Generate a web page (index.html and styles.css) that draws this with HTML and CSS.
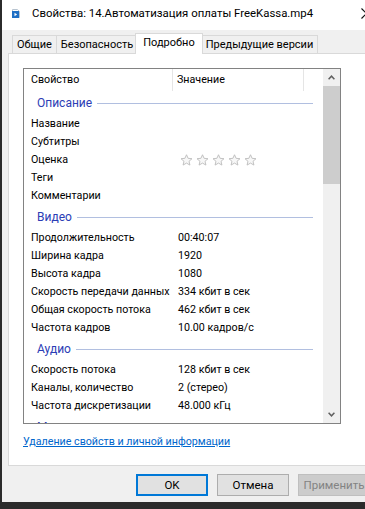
FILE: index.html
```html
<!DOCTYPE html>
<html lang="ru">
<head>
<meta charset="utf-8">
<title>Свойства</title>
<link rel="stylesheet" href="styles.css">
</head>
<body>
<div class="window">
  <div class="titlebar">
    <svg class="appicon" width="8" height="9" viewBox="0 0 8 9">
      <path d="M0.5 0.5h5l2 2v6h-7z" fill="#fff" stroke="#b8c4d0"/>
      <rect x="0" y="2" width="7" height="7" fill="#1f6fc4"/>
      <path d="M2.5 3.8l2.6 1.7-2.6 1.7z" fill="#fff"/>
    </svg>
    <span class="title">Свойства: 14.Автоматизация оплаты FreeKassa.mp4</span>
    <svg class="close" width="11" height="11" viewBox="0 0 11 11">
      <path d="M0.5 0.5l10 10M10.5 0.5l-10 10" stroke="#111" stroke-width="1.2"/>
    </svg>
  </div>
  <div class="tabs">
    <div class="tab">Общие</div>
    <div class="tab">Безопасность</div>
    <div class="tab active">Подробно</div>
    <div class="tab">Предыдущие версии</div>
  </div>
  <div class="panel">
    <div class="listview">
      <div class="list">
        <div class="header">
          <div class="hcell hname">Свойство</div>
          <div class="hcell hvalue">Значение</div>
          <div class="hcell hrest"></div>
        </div>
        <div class="group"><span>Описание</span><i class="rule"></i></div>
        <div class="row"><span class="k">Название</span><span class="v"></span></div>
        <div class="row"><span class="k">Субтитры</span><span class="v"></span></div>
        <div class="row"><span class="k">Оценка</span>
          <span class="v stars">
            <svg class="star" viewBox="0 0 14 13"><path d="M7 0.8l1.75 3.9 4.2.4-3.2 2.8.95 4.1L7 9.85 3.3 12l.95-4.1-3.2-2.8 4.2-.4z"/></svg>
            <svg class="star" viewBox="0 0 14 13"><path d="M7 0.8l1.75 3.9 4.2.4-3.2 2.8.95 4.1L7 9.85 3.3 12l.95-4.1-3.2-2.8 4.2-.4z"/></svg>
            <svg class="star" viewBox="0 0 14 13"><path d="M7 0.8l1.75 3.9 4.2.4-3.2 2.8.95 4.1L7 9.85 3.3 12l.95-4.1-3.2-2.8 4.2-.4z"/></svg>
            <svg class="star" viewBox="0 0 14 13"><path d="M7 0.8l1.75 3.9 4.2.4-3.2 2.8.95 4.1L7 9.85 3.3 12l.95-4.1-3.2-2.8 4.2-.4z"/></svg>
            <svg class="star" viewBox="0 0 14 13"><path d="M7 0.8l1.75 3.9 4.2.4-3.2 2.8.95 4.1L7 9.85 3.3 12l.95-4.1-3.2-2.8 4.2-.4z"/></svg>
          </span>
        </div>
        <div class="row"><span class="k">Теги</span><span class="v"></span></div>
        <div class="row"><span class="k">Комментарии</span><span class="v"></span></div>
        <div class="group"><span>Видео</span><i class="rule"></i></div>
        <div class="row"><span class="k">Продолжительность</span><span class="v">00:40:07</span></div>
        <div class="row"><span class="k">Ширина кадра</span><span class="v">1920</span></div>
        <div class="row"><span class="k">Высота кадра</span><span class="v">1080</span></div>
        <div class="row"><span class="k">Скорость передачи данных</span><span class="v">334 кбит в сек</span></div>
        <div class="row"><span class="k">Общая скорость потока</span><span class="v">462 кбит в сек</span></div>
        <div class="row"><span class="k">Частота кадров</span><span class="v">10.00 кадров/с</span></div>
        <div class="group"><span>Аудио</span><i class="rule"></i></div>
        <div class="row"><span class="k">Скорость потока</span><span class="v">128 кбит в сек</span></div>
        <div class="row"><span class="k">Каналы, количество</span><span class="v">2 (стерео)</span></div>
        <div class="row"><span class="k">Частота дискретизации</span><span class="v">48.000 кГц</span></div>
        <div class="group"><span>Мультимедиа</span><i class="rule"></i></div>
      </div>
      <div class="scrollbar">
        <div class="sbtn">
          <svg width="7" height="5" viewBox="0 0 7 5"><path d="M0.6 4.2L3.5 1.2 6.4 4.2" fill="none" stroke="#606060" stroke-width="1.5"/></svg>
        </div>
        <div class="thumb"></div>
        <div class="track"></div>
        <div class="sbtn">
          <svg width="7" height="5" viewBox="0 0 7 5"><path d="M0.6 0.8L3.5 3.8 6.4 0.8" fill="none" stroke="#606060" stroke-width="1.5"/></svg>
        </div>
      </div>
    </div>
    <a class="link" href="#">Удаление свойств и личной информации</a>
  </div>
  <div class="buttons">
    <button class="btn default">OK</button>
    <button class="btn">Отмена</button>
    <button class="btn disabled">Применить</button>
  </div>
</div>
</body>
</html>
```

FILE: styles.css
```css
* { box-sizing: border-box; }

html, body {
  margin: 0;
  padding: 0;
  background: #2b2b2b;
  overflow: hidden;
}

body {
  font-family: Roboto, "Liberation Sans", sans-serif;
  font-size: 10.7px;
  color: #000;
}

.window {
  margin-left: 2px;
  width: 380px;
  height: 502px;
  background: #f0f0f0;
  display: flex;
  flex-direction: column;
  overflow: hidden;
}

/* title bar */
.titlebar {
  height: 30px;
  flex: none;
  background: #fff;
  display: flex;
  align-items: flex-start;
  padding: 4px 10px 0 10px;
}
.appicon { margin-top: 5px; flex: none; }
.title {
  margin-left: 12px;
  line-height: 18px;
  font-size: 11.4px;
  white-space: nowrap;
}
.close { margin-left: auto; margin-top: 4px; flex: none; }

/* tabs */
.tabs {
  height: 23px;
  flex: none;
  display: flex;
  align-items: flex-end;
  padding-left: 10px;
}
.tab {
  height: 18px;
  line-height: 17px;
  padding: 0 4px;
  border: 1px solid #d9d9d9;
  border-bottom: none;
  margin-right: -1px;
  background: #f0f0f0;
  white-space: nowrap;
  font-size: 11px;
}
.tab.active {
  height: 21px;
  line-height: 18px;
  background: #fff;
  margin: 0 -2px -1px -2px;
  padding: 0 7px;
  position: relative;
  z-index: 1;
}

/* panel */
.panel {
  height: 413px;
  flex: none;
  margin-left: 6px;
  background: #fff;
  border: 1px solid #d9d9d9;
  border-right: none;
  padding: 14px 0 0 14px;
  display: flex;
  flex-direction: column;
  align-items: flex-start;
}

.listview {
  width: 318px;
  height: 356px;
  border: 1px solid #828282;
  display: flex;
  overflow: hidden;
}
.list {
  flex: 1;
  min-width: 0;
  overflow: hidden;
}

.header {
  height: 22px;
  display: flex;
}
.hcell {
  height: 22px;
  line-height: 22px;
  border-right: 1px solid #e5e5e5;
  white-space: nowrap;
}
.hname { width: 149px; padding-left: 7px; }
.hvalue { width: 131px; padding-left: 4px; }
.hrest { flex: 1; border-right: none; }

.group {
  height: 24px;
  display: flex;
  align-items: center;
  padding: 0 10px 0 13px;
  color: #2b3db5;
  font-size: 12px;
}
.rule {
  flex: 1;
  height: 1px;
  margin-left: 5px;
  background: #b1bfe0;
}

.row {
  height: 18px;
  line-height: 18px;
  display: flex;
  white-space: nowrap;
}
.k {
  width: 154px;
  flex: none;
  padding-left: 7px;
  overflow: hidden;
}
.v { flex: 1; }

.stars {
  display: flex;
  align-items: center;
  gap: 3px;
  padding-left: 2px;
}
.star {
  width: 13px;
  height: 12px;
  fill: #f7f7f7;
  stroke: #bdbdbd;
  stroke-width: 1;
}

/* scrollbar */
.scrollbar {
  width: 17px;
  flex: none;
  background: #f0f0f0;
  display: flex;
  flex-direction: column;
}
.sbtn {
  height: 17px;
  flex: none;
  display: flex;
  align-items: center;
  justify-content: center;
}
.thumb {
  height: 98px;
  flex: none;
  background: #cdcdcd;
}
.track { flex: 1; }

.link {
  margin: 10px 0 0 0;
  line-height: 16px;
  color: #0066cc;
  text-decoration: underline;
  white-space: nowrap;
}

/* buttons */
.buttons {
  display: flex;
  gap: 9px;
  padding: 8px 0 0 134px;
}
.btn {
  width: 72px;
  height: 22px;
  flex: none;
  font-family: inherit;
  font-size: 11.5px;
  color: #000;
  background: #e1e1e1;
  border: 1px solid #adadad;
  padding: 0;
  margin: 0;
}
.btn.default { border: 2px solid #0078d7; }
.btn.disabled {
  background: #cccccc;
  border-color: #bfbfbf;
  color: #838383;
}
```
